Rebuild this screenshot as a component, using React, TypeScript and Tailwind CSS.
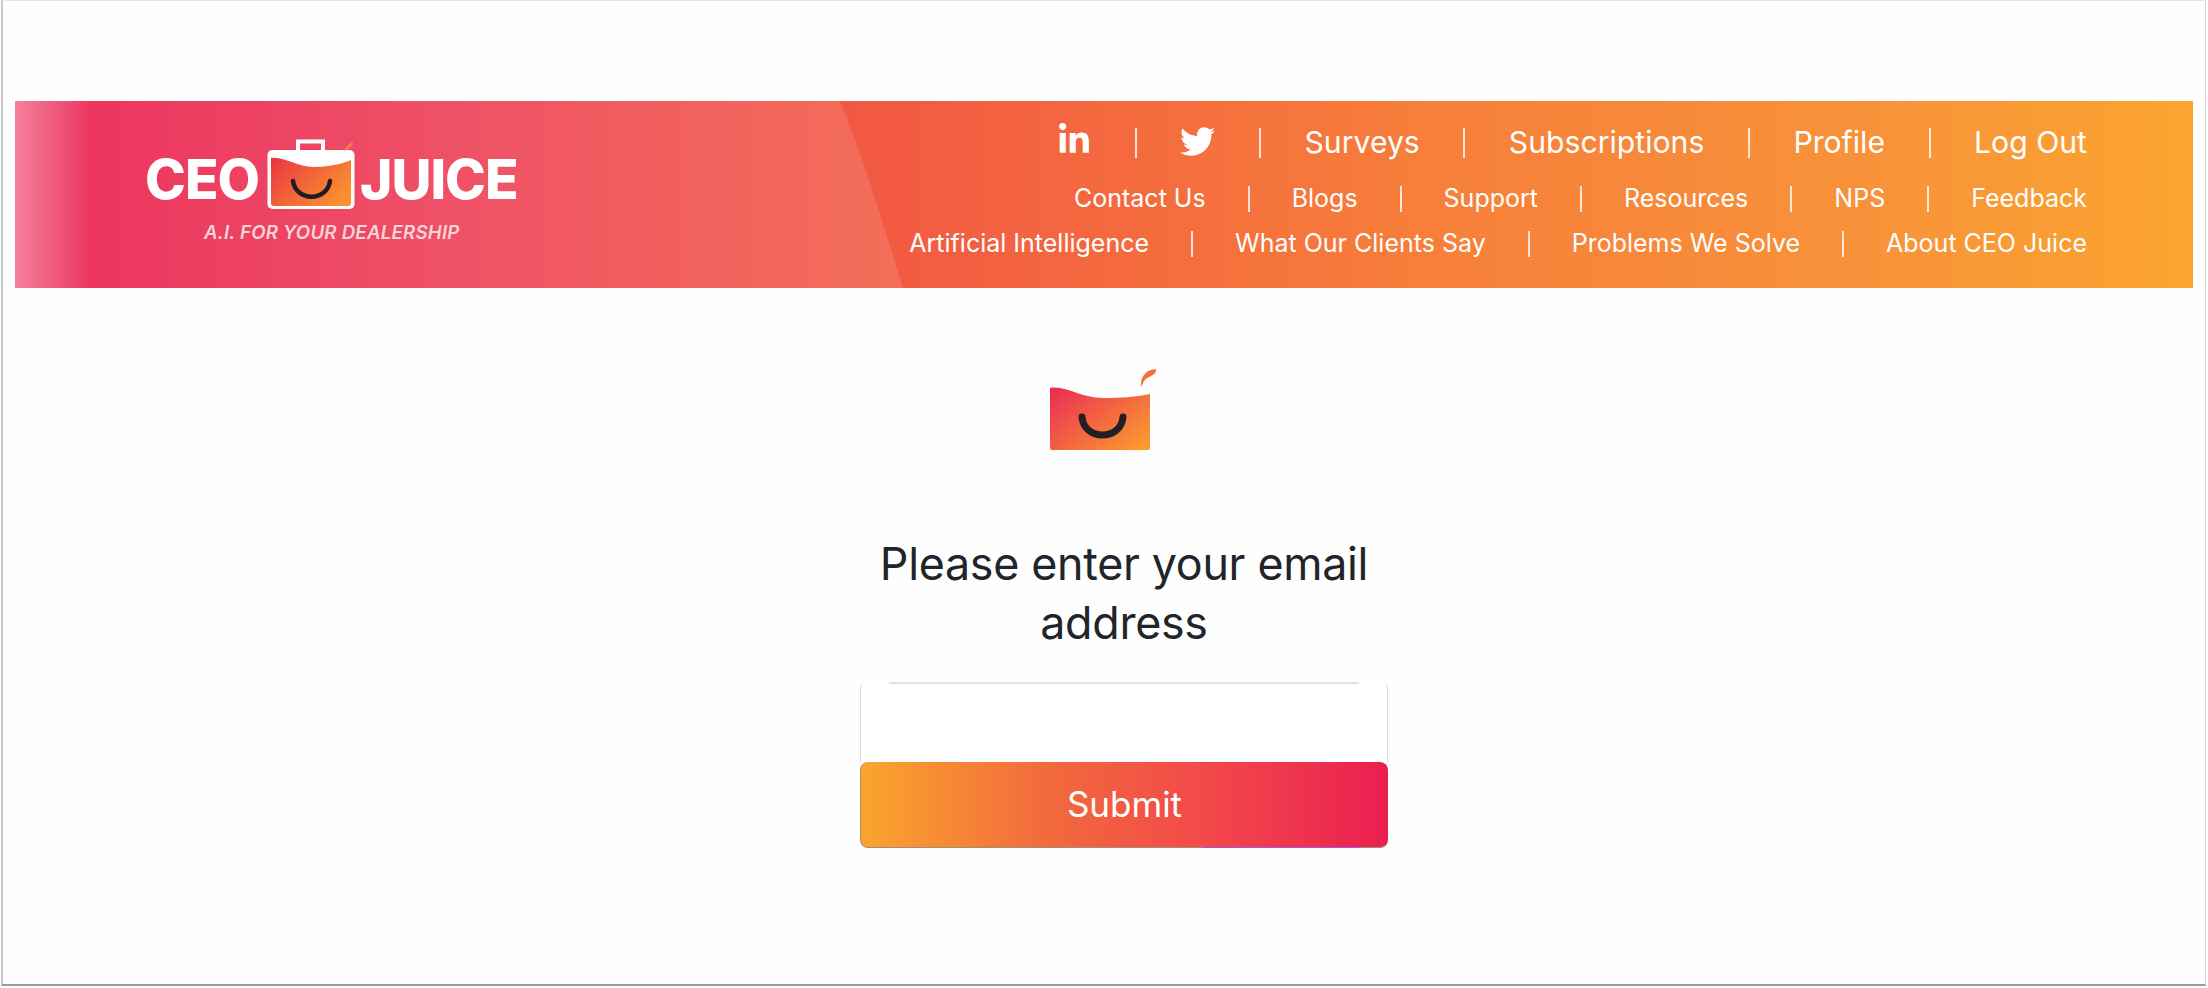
import React from "react";
import { FaLinkedinIn, FaTwitter } from "react-icons/fa";

const row2 = ["Contact Us", "Blogs", "Support", "Resources", "NPS", "Feedback"];
const row3 = ["Artificial Intelligence", "What Our Clients Say", "Problems We Solve", "About CEO Juice"];

function Sep() {
  return <span className="w-[2px] h-[30px] bg-white/80 mx-[43.5px]" />;
}

function NavRow({ items, className }: { items: string[]; className: string }) {
  return (
    <div className={`flex items-center text-white ${className}`}>
      {items.map((item, i) => (
        <React.Fragment key={item}>
          {i > 0 && <span className="w-[2px] h-[26px] bg-white/80 mx-[42px]" />}
          <a href="#">{item}</a>
        </React.Fragment>
      ))}
    </div>
  );
}

// briefcase with juice, used in the banner logo
function CaseMark() {
  return (
    <svg width="90" height="72" viewBox="0 0 90 72" className="shrink-0">
      <defs>
        <linearGradient id="caseFill" x1="0" y1="0" x2="1" y2="0.6">
          <stop offset="0" stopColor="#ea3540" />
          <stop offset="1" stopColor="#f98f30" />
        </linearGradient>
      </defs>
      <path d="M32 13V3.5h25V13" fill="none" stroke="#fff" strokeWidth="4" />
      <rect x="1.5" y="12" width="87" height="59" rx="5" fill="#fff" />
      <path
        d="M5 20C18 18 30 29 48 29C62 29 76 26 85 22V65a3 3 0 0 1-3 3H8a3 3 0 0 1-3-3Z"
        fill="url(#caseFill)"
      />
      <path d="M27 43C30 64 61 64 64 43" fill="none" stroke="#231a22" strokeWidth="4.5" strokeLinecap="round" />
      <path d="M78 13C79 9 82 6 87 4C87 8 83 11 78 13Z" fill="#f5803c" />
    </svg>
  );
}

// same mark without the white case, above the form
function JuiceMark() {
  return (
    <svg width="112" height="86" viewBox="0 0 112 86">
      <defs>
        <linearGradient id="juiceFill" x1="0" y1="0.1" x2="1" y2="0.9">
          <stop offset="0" stopColor="#ec2f55" />
          <stop offset="1" stopColor="#fa9c2e" />
        </linearGradient>
      </defs>
      <path
        d="M2 22C18 19 32 32 55 32C72 32 88 31 102 28V82a2 2 0 0 1-2 2H4a2 2 0 0 1-2-2Z"
        fill="url(#juiceFill)"
      />
      <path d="M34 51C36 75 73 75 75 51" fill="none" stroke="#231f26" strokeWidth="7" strokeLinecap="round" />
      <path d="M93 21C92 13 96 4 108 3C109 8 103 10 99 12C96 14 95 17 93 21Z" fill="#f4713c" />
    </svg>
  );
}

export default function App() {
  return (
    <div className="w-[2208px] h-[988px] bg-white font-['Inter',sans-serif] overflow-hidden">
      <div className="h-[986px] ml-[1px] mr-[2px] border-l-2 border-r border-t border-l-[#c8c8c8] border-r-[#d8d8d8] border-t-[#e6e6e6] border-b-2 border-b-[#9a9a9a] bg-[#fefefe] pt-[100px] px-[12px]">
        {/* banner */}
        <header className="relative h-[187px] flex justify-between bg-[linear-gradient(90deg,#f4809c_0%,#ec3660_3.5%,#ee4a60_20%,#f25a42_40%,#f77f3a_65%,#f8923a_85%,#fba52f_100%)]">
          <svg className="absolute left-0 top-0 h-full" width="900" height="187" viewBox="0 0 900 187">
            <defs>
              <linearGradient id="swoosh" x1="0" y1="0" x2="1" y2="0">
                <stop offset="0.1" stopColor="#fff" stopOpacity="0" />
                <stop offset="0.5" stopColor="#fff" stopOpacity="0.04" />
                <stop offset="1" stopColor="#fff" stopOpacity="0.12" />
              </linearGradient>
            </defs>
            <path d="M0 0H825C850 60 870 130 888 187H0Z" fill="url(#swoosh)" />
          </svg>

          <div className="relative pl-[130px] pt-[37px]">
            <div className="flex items-end h-[72px] text-white font-extrabold text-[55px] leading-[50px] tracking-[-1px]">
              <span className="pb-[6px] mr-[7px]">CEO</span>
              <CaseMark />
              <span className="pb-[6px] ml-[4px]">JUICE</span>
            </div>
            <p className="mt-[14px] pl-[59px] text-[18.7px] leading-[18px] font-semibold italic text-[#f9d3d6] tracking-[0.2px]">
              A.I. FOR YOUR DEALERSHIP
            </p>
          </div>

          <nav className="relative flex flex-col items-end pr-[106px] pt-[22px]">
            <div className="flex items-center h-[40px] text-white text-[30.2px]">
              <FaLinkedinIn className="text-[34px] -mt-[6px]" />
              <Sep />
              <FaTwitter className="text-[35px] -mt-[4px]" />
              <Sep />
              <a href="#">Surveys</a>
              <Sep />
              <a href="#">Subscriptions</a>
              <Sep />
              <a href="#">Profile</a>
              <Sep />
              <a href="#">Log Out</a>
            </div>
            <NavRow items={row2} className="h-[30px] mt-[21px] text-[25px]" />
            <NavRow items={row3} className="h-[30px] mt-[15px] text-[25px]" />
          </nav>
        </header>

        {/* email form */}
        <main className="flex flex-col items-center pl-[40px]">
          <div className="mt-[78px] h-[86px] mr-[40px]">
            <JuiceMark />
          </div>
          <h1 className="mt-[83px] w-[528px] text-center text-[44.8px] leading-[59px] tracking-[-0.3px] text-[#212529]">
            Please enter your email address
          </h1>
          <form className="mt-[29px] w-[528px]">
            <div className="relative">
              <input
                type="email"
                className="block w-full h-[80px] rounded-t-md border-x border-[#d9dce6] bg-white outline-none"
              />
              <span className="absolute left-[29px] right-[29px] top-0 h-[2px] bg-[#e2e2e2]" />
            </div>
            <button
              type="button"
              className="relative block w-full h-[86px] rounded-lg border-l border-b border-[#a08f78] text-white text-[35px] bg-[linear-gradient(90deg,#faa52e_0%,#f26a3c_35%,#f2494a_65%,#ea1f50_100%)]"
            >
              Submit
              <span className="absolute right-[28px] -bottom-[1px] w-[158px] h-[1px] bg-[#b050e0]" />
            </button>
          </form>
        </main>
      </div>
    </div>
  );
}
